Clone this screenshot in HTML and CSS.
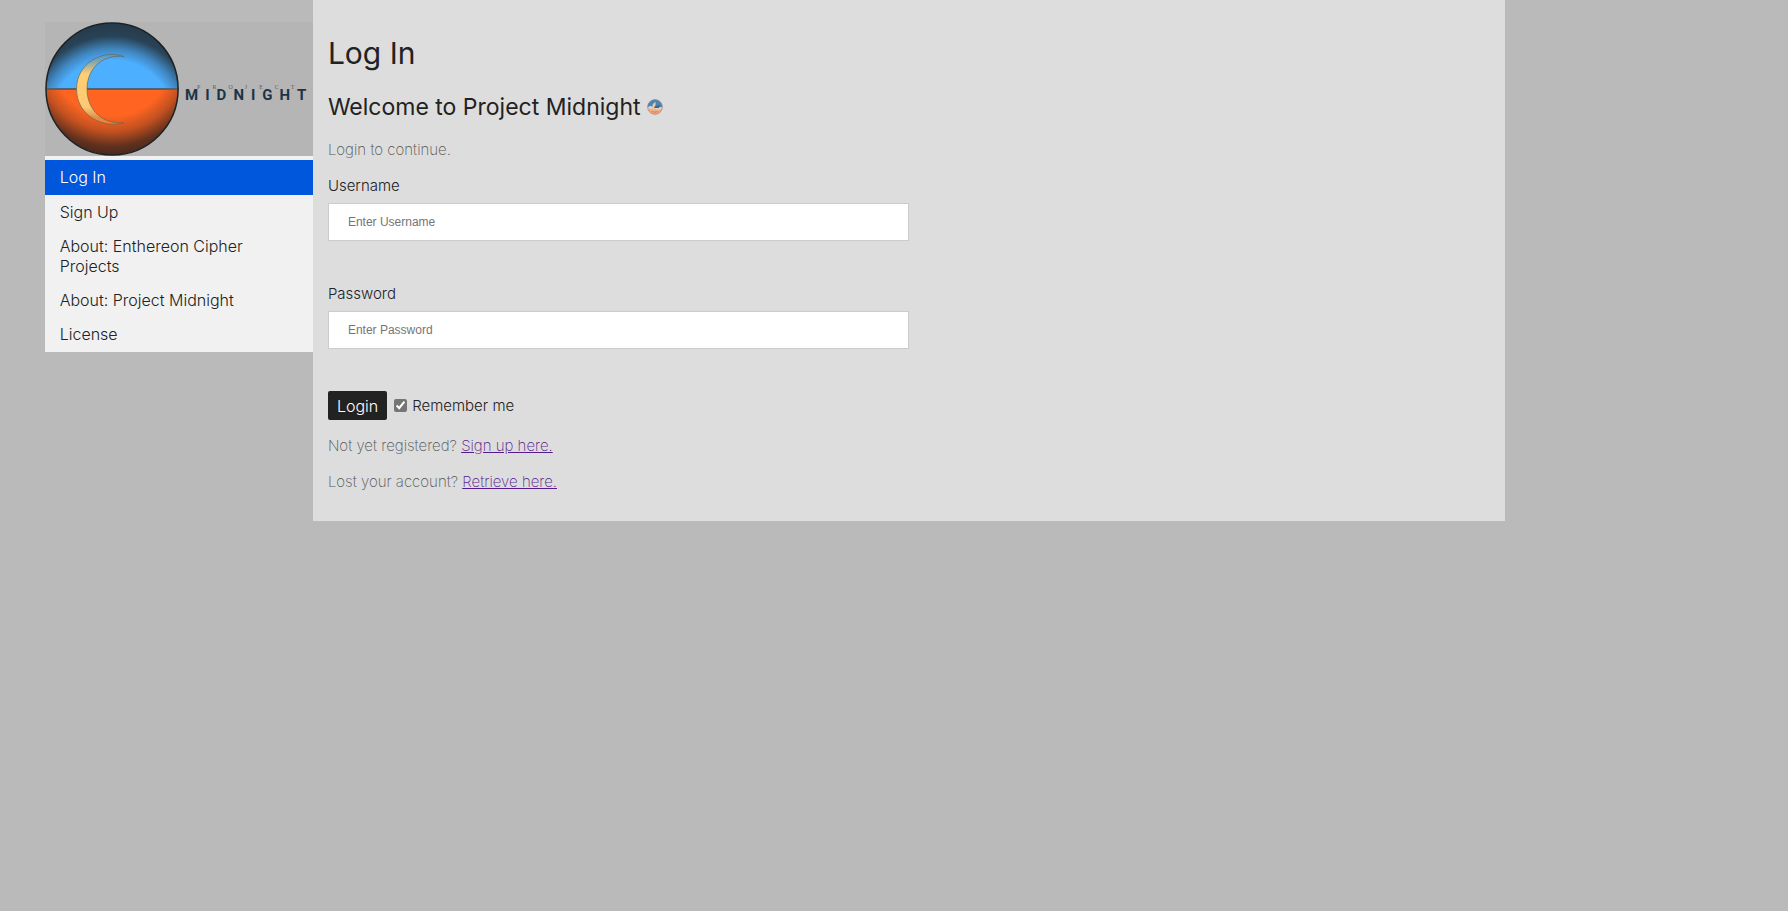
FILE: index.html
```html
<!DOCTYPE html>
<html lang="en">
<head>
<meta charset="utf-8">
<meta name="viewport" content="width=device-width, initial-scale=1">
<title>Log In - Project Midnight</title>
<link rel="stylesheet" href="styles.css">
</head>
<body>
<div class="layout">
  <nav class="sidebar">
    <svg class="brand" viewBox="0 0 268 134" role="img" aria-label="Project Midnight">
      <defs>
        <radialGradient id="night" gradientUnits="userSpaceOnUse" cx="67" cy="100" r="100">
          <stop offset=".62" stop-color="#263a49" stop-opacity="0"/>
          <stop offset=".73" stop-color="#263a49" stop-opacity=".35"/>
          <stop offset=".86" stop-color="#263a49" stop-opacity=".93"/>
          <stop offset="1" stop-color="#263a49"/>
        </radialGradient>
        <radialGradient id="dusk" gradientUnits="userSpaceOnUse" cx="67" cy="34" r="100">
          <stop offset=".6" stop-color="#3a241d" stop-opacity="0"/>
          <stop offset=".75" stop-color="#3a241d" stop-opacity=".3"/>
          <stop offset=".9" stop-color="#3a241d" stop-opacity=".8"/>
          <stop offset="1" stop-color="#3a241d" stop-opacity=".95"/>
        </radialGradient>
        <linearGradient id="moon" x1="0" y1="0" x2="0" y2="1">
          <stop offset="0" stop-color="#4b9bd5"/>
          <stop offset=".1" stop-color="#81a5b0"/>
          <stop offset=".28" stop-color="#ffce73"/>
          <stop offset=".75" stop-color="#ffc974"/>
          <stop offset=".9" stop-color="#dc9350"/>
          <stop offset="1" stop-color="#f57a35"/>
        </linearGradient>
      </defs>
      <path d="M1 67a66 66 0 0 1 132 0z" fill="#4dafff"/>
      <path d="M1 67a66 66 0 0 0 132 0z" fill="#ff6521"/>
      <path d="M1 67a66 66 0 0 1 132 0z" fill="url(#night)"/>
      <path d="M1 67a66 66 0 0 0 132 0z" fill="url(#dusk)"/>
      <path d="M1 67h132" stroke="#4d6477" stroke-width="2"/>
      <circle cx="67" cy="67" r="66" fill="none" stroke="#1d2225" stroke-width="1.500"/>
      <path d="M79 34.500C59 27 31.500 40 31.500 67S59 107 79 100.500C59 103 42 89 42 67S59 32 79 34.500z" fill="url(#moon)" stroke="#6a6650" stroke-width=".7"/>
      <text class="brand-name" x="140" y="78">MIDNIGHT</text>
      <text class="brand-over" x="152" y="67">PROJECT</text>
    </svg>
    <a class="nav-link active" href="#login">Log In</a>
    <a class="nav-link" href="#signup">Sign Up</a>
    <a class="nav-link" href="#ecp">About: Enthereon Cipher Projects</a>
    <a class="nav-link" href="#midnight">About: Project Midnight</a>
    <a class="nav-link" href="#license">License</a>
  </nav>
  <main class="content" id="login">
    <h1 class="title">Log In</h1>
    <h2 class="subtitle">Welcome to Project Midnight
      <svg class="badge" viewBox="0 0 16 16" aria-hidden="true">
        <circle cx="8" cy="8" r="7.500" fill="#f0b08a"/>
        <path d="M.5 8a7.500 7.500 0 0 1 15 0z" fill="#4487bd"/>
        <path d="M1 8q3-2 5 0t9 0v2q-4 1-7 0t-7 0z" fill="#d9d4cf"/>
        <path d="M9 3Q4 5 6 8t5 1Q7 7 9 3z" fill="#f3c98c"/>
        <path d="M8 7l5-1-1 3H7z" fill="#49657f"/>
        <path d="M3 11q5 3 10 0-2 3-5 3t-5-3z" fill="#ef7c48"/>
        <circle cx="8" cy="8" r="7.300" fill="none" stroke="#a88078" stroke-width=".7"/>
      </svg>
    </h2>
    <form class="login">
      <p class="text">Login to continue.</p>
      <label class="label" for="user">Username</label>
      <input class="field" id="user" type="text" placeholder="Enter Username">
      <label class="label" for="pass">Password</label>
      <input class="field" id="pass" type="password" placeholder="Enter Password">
      <div class="actions">
        <button class="submit" type="submit">Login</button>
        <input class="check" id="remember" type="checkbox" checked>
        <label class="remember" for="remember">Remember me</label>
      </div>
      <p class="text">Not yet registered? <a class="link" href="#signup">Sign up here.</a></p>
      <p class="text">Lost your account? <a class="link" href="#retrieve">Retrieve here.</a></p>
    </form>
  </main>
</div>
</body>
</html>
```
FILE: styles.css
```css
* { box-sizing: border-box; }

body {
  margin: 0;
  background: #bababa;
  color: #222;
  font: 300 16px/20px Inter, sans-serif;
}

.layout {
  display: flex;
  align-items: flex-start;
  padding-left: 2.5%;
}

.sidebar {
  width: 15vw;
  margin-top: 22px;
  padding-bottom: 1px;
  background: #f1f1f1;
}

.brand {
  display: block;
  width: 100%;
  margin-bottom: 4px;
  background: #b5b5b5;
}

.brand-name {
  font: 700 15px "Roboto", sans-serif;
  letter-spacing: 7px;
  fill: #1d3447;
}

.brand-over {
  font: 400 6px "Liberation Serif", serif;
  letter-spacing: 12px;
  fill: #665f59;
}

.nav-link {
  display: block;
  padding: 7px 15px;
  color: #222;
  font-size: 16px;
  line-height: 20px;
  text-decoration: none;
}

.nav-link.active {
  padding-bottom: 8px;
  background: #0057dc;
  color: #fff;
}

.content {
  width: 66.67vw;
  padding: 33px 15px 29px;
  background: #ddd;
}

.title {
  margin: 0 0 18px;
  font-size: 30px;
  font-weight: 400;
  line-height: 40px;
}

.subtitle {
  margin: 0 0 17px;
  font-size: 23px;
  font-weight: 400;
  line-height: 32px;
}

.badge {
  width: 16px;
  height: 16px;
}

.text {
  margin: 0 0 16px;
  color: #555;
  font-size: 15px;
  font-weight: 200;
}

.text:last-child { margin-bottom: 0; }

.label {
  display: block;
  margin-bottom: 7px;
  font-size: 15px;
}

.field {
  display: block;
  width: 50%;
  height: 38px;
  margin-bottom: 43px;
  padding: 0 19px;
  border: 1px solid #ccc;
  background: #fff;
  font: 400 12px "Liberation Sans", Arial, sans-serif;
}

.field::placeholder { color: #757575; }

.actions {
  display: flex;
  align-items: center;
  margin: -1px 0 16px;
}

.submit {
  height: 29px;
  padding: 0 9px;
  border: 0;
  border-radius: 2px;
  background: #222;
  color: #fff;
  font: 300 16px Inter, sans-serif;
}

.check {
  width: 13px;
  height: 13px;
  margin: 0 5px 0 7px;
  accent-color: #757575;
}

.remember { font-size: 15px; }

.link { color: #551a8b; }
```
